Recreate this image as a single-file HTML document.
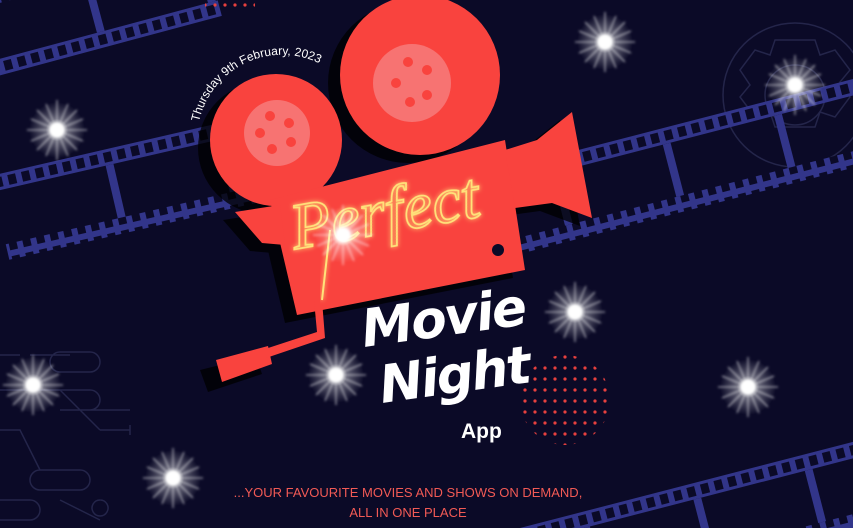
<!DOCTYPE html>
<html><head><meta charset="utf-8"><style>
html,body{margin:0;padding:0;background:#0b0a27;width:853px;height:528px;overflow:hidden}
svg{display:block;position:absolute;left:0;top:0}
</style></head><body>
<svg width="853" height="528" viewBox="0 0 853 528" xmlns="http://www.w3.org/2000/svg">
<defs>
<pattern id="holes" width="14" height="16" patternUnits="userSpaceOnUse">
<rect width="14" height="16" fill="#32358a"/><rect x="3" y="3" width="8" height="10" fill="#0b0a27"/>
</pattern>
<pattern id="frames" width="115" height="60" patternUnits="userSpaceOnUse">
<rect x="0" y="0" width="8" height="60" fill="#32358a"/>
</pattern>
<radialGradient id="spk"><stop offset="0" stop-color="#fff" stop-opacity="1"/><stop offset="0.15" stop-color="#fff" stop-opacity="0.95"/><stop offset="0.4" stop-color="#fff" stop-opacity="0.35"/><stop offset="1" stop-color="#fff" stop-opacity="0"/></radialGradient>
<filter id="soft" x="-50%" y="-50%" width="200%" height="200%"><feGaussianBlur stdDeviation="1.3"/></filter>
<g id="sp">
<circle r="28" fill="url(#spk)"/>
<g stroke="#fff" stroke-opacity="0.5" stroke-width="1.6" filter="url(#soft)">
<line x1="-30" y1="0" x2="30" y2="0"/><line x1="0" y1="-30" x2="0" y2="30"/>
<line x1="-20" y1="-20" x2="20" y2="20"/><line x1="-20" y1="20" x2="20" y2="-20"/>
<line x1="-26" y1="-11" x2="26" y2="11"/><line x1="-26" y1="11" x2="26" y2="-11"/>
<line x1="-11" y1="-26" x2="11" y2="26"/><line x1="11" y1="-26" x2="-11" y2="26"/>
</g>
<circle r="7" fill="#fff" filter="url(#soft)"/>
</g>
<pattern id="dots" width="10" height="11" patternUnits="userSpaceOnUse"><circle cx="5" cy="5" r="1.6" fill="#e8403e"/></pattern>
<filter id="glow" x="-20%" y="-20%" width="140%" height="140%"><feGaussianBlur stdDeviation="2.5" result="b"/><feMerge><feMergeNode in="b"/><feMergeNode in="SourceGraphic"/></feMerge></filter>
</defs>

<g fill="none" stroke="#24254a" stroke-width="1.5">
<circle cx="795" cy="95" r="72"/>
<circle cx="795" cy="95" r="30"/>
<path d="M775 40 h40 l5 15 l15 -5 l15 20 l-10 12 l10 15 l-15 20 l-15 -5 l-5 15 h-40 l-5 -15 l-15 5 l-15 -20 l10 -12 l-10 -15 l15 -20 l15 5z"/>
<path d="M0 355 h20 M30 355 h40 M60 352 h30 a10 10 0 0 1 0 20 h-30 a10 10 0 0 1 0 -20z M0 390 h60 l40 40 M60 390 h30 a10 10 0 0 1 0 20 h-30 M90 410 h40 M0 430 h20 l20 40 M40 470 h40 a10 10 0 0 1 0 20 h-40 a10 10 0 0 1 0 -20z M100 430 h30 M130 425 v10 M0 500 h30 a10 10 0 0 1 0 20 h-30 M60 500 l40 20 M100 500 a8 8 0 1 0 0.1 0"/>
</g>

<g transform="translate(-10 78) rotate(-15)">
<rect x="0" y="-16" width="240" height="16" fill="url(#holes)"/>
<rect x="0" y="-86" width="240" height="16" fill="url(#holes)"/>
<rect x="20" y="-70" width="240" height="54" fill="url(#frames)"/>
</g>
<g transform="translate(-10 176) rotate(-13)">
<rect x="0" y="0" width="320" height="16" fill="url(#holes)"/>
<rect x="0" y="70" width="320" height="16" fill="url(#holes)"/>
<rect x="40" y="16" width="300" height="54" fill="url(#frames)"/>
</g>
<g transform="translate(470 178) rotate(-14.5)">
<rect x="0" y="0" width="450" height="16" fill="url(#holes)"/>
<rect x="0" y="70" width="450" height="16" fill="url(#holes)"/>
<g transform="translate(80 0)"><rect x="0" y="16" width="400" height="54" fill="url(#frames)"/></g>
</g>
<g transform="translate(520 528) rotate(-14.5)">
<rect x="0" y="0" width="400" height="16" fill="url(#holes)"/>
<rect x="0" y="70" width="400" height="16" fill="url(#holes)"/>
<g transform="translate(60 0)"><rect x="0" y="16" width="400" height="54" fill="url(#frames)"/></g>
</g>

<rect x="205" y="-3" width="50" height="14" fill="url(#dots)"/>
<circle cx="565" cy="400" r="45" fill="url(#dots)"/>

<g fill="#000" opacity="0.75" transform="translate(-12 8)">
<circle cx="276" cy="140" r="66"/><circle cx="420" cy="75" r="80"/>
<polygon points="270,200 505,140 525,270 297,315"/>
<polygon points="235,212 280,205 285,245 262,243"/>
<polygon points="505,150 537,140 572,112 592,218 552,203 515,208"/>
<polygon points="212,362 268,348 274,366 220,384"/>
</g>
<g fill="#f9433e">
<circle cx="276" cy="140" r="66"/>
<circle cx="420" cy="75" r="80"/>
<polygon points="270,200 505,140 525,270 297,315"/>
<polygon points="235,212 280,205 285,245 262,243"/>
<polygon points="505,150 537,140 572,112 592,218 552,203 515,208"/>
<polygon points="216,360 268,346 272,364 222,382"/>
<polygon points="314,300 322,300 325,338 266,358 262,350 317,332"/>
</g>
<circle cx="277" cy="133" r="33" fill="#f77372"/>
<g fill="#f9433e"><circle cx="270" cy="116" r="5"/><circle cx="289" cy="123" r="5"/><circle cx="260" cy="133" r="5"/><circle cx="291" cy="142" r="5"/><circle cx="272" cy="149" r="5"/></g>
<circle cx="412" cy="83" r="39" fill="#f77372"/>
<g fill="#f9433e"><circle cx="408" cy="62" r="5"/><circle cx="396" cy="83" r="5"/><circle cx="410" cy="102" r="5"/><circle cx="427" cy="70" r="5"/><circle cx="427" cy="95" r="5"/></g>
<circle cx="498" cy="250" r="6" fill="#0b0a27"/>

<path id="arc" d="M199 122 A 85 85 0 0 1 336 74" fill="none"/>
<text font-family="'Liberation Sans',sans-serif" font-size="12" fill="#fff"><textPath href="#arc">Thursday 9th February, 2023</textPath></text>

<g filter="url(#glow)" transform="rotate(-10 380 215)">
<text x="290" y="234" font-family="'Liberation Serif',serif" font-style="italic" font-size="66" fill="none" stroke="#ffe27a" stroke-width="1.8">Perfect</text>
</g>
<path d="M330 230 L322 300" stroke="#ffe27a" stroke-width="2" fill="none" filter="url(#glow)"/>

<g font-family="'DejaVu Sans',sans-serif" font-weight="bold" font-style="italic" fill="#fff" transform="rotate(-8 450 340)">
<text x="364" y="335" font-size="52" letter-spacing="-2">Movie</text>
<text x="374" y="393" font-size="52" letter-spacing="-2">Night</text>
</g>
<text x="461" y="438" font-family="'Liberation Sans',sans-serif" font-weight="bold" font-size="21" fill="#fff">App</text>

<use href="#sp" x="57" y="130"/>
<use href="#sp" x="605" y="42"/>
<use href="#sp" x="795" y="85"/>
<use href="#sp" x="575" y="312"/>
<use href="#sp" x="336" y="375"/>
<use href="#sp" x="33" y="385"/>
<use href="#sp" x="748" y="387"/>
<use href="#sp" x="173" y="478"/>
<use href="#sp" x="343" y="235"/>

<g font-family="'Liberation Sans',sans-serif" font-size="13" fill="#f25a55" text-anchor="middle">
<text x="408" y="497">...YOUR FAVOURITE MOVIES AND SHOWS ON DEMAND,</text>
<text x="408" y="517">ALL IN ONE PLACE</text>
</g>
</svg>
</body></html>
